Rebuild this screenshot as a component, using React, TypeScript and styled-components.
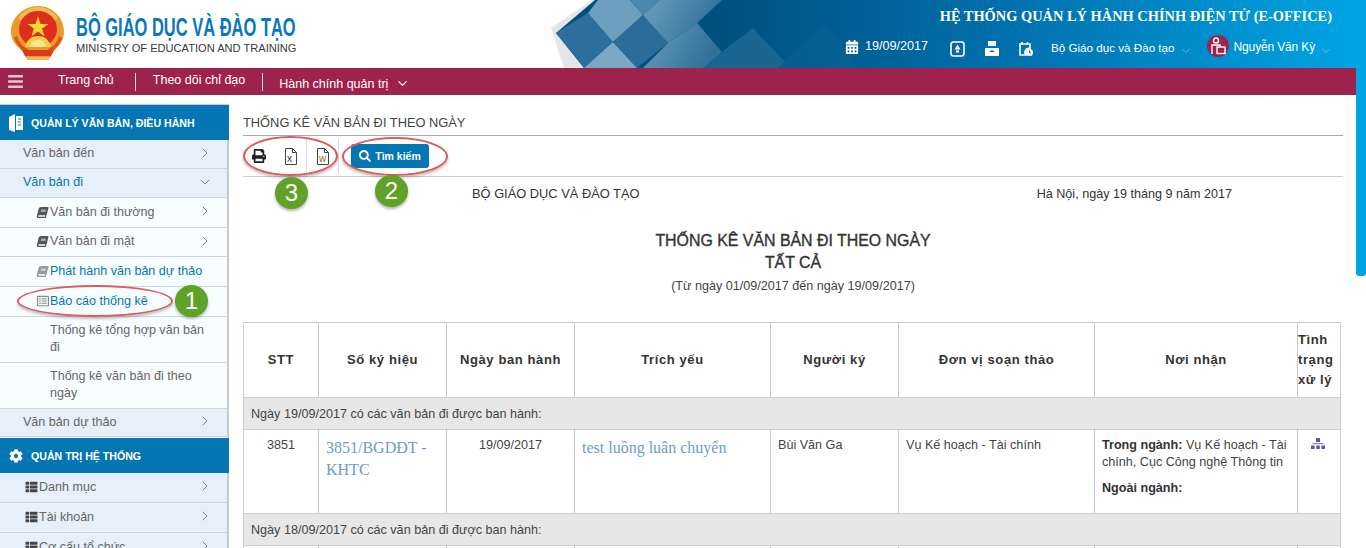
import React from "react";
import styled, { createGlobalStyle } from "styled-components";
import { FaCalendarAlt, FaPrint, FaSearch, FaBook, FaCog, FaThList, FaBars, FaRegListAlt } from "react-icons/fa";
import { ChevronRight, ChevronDown } from "lucide-react";

const Global = createGlobalStyle`
  html, body { margin: 0; padding: 0; background: #fff; overflow: hidden; }
  body { font-family: "Liberation Sans", Arial, sans-serif; color: #333; }
  * { box-sizing: border-box; }
`;

const Page = styled.div`
  position: relative;
  width: 1366px;
  height: 548px;
  overflow: hidden;
  background: #fff;
`;
const Frame = styled.div`
  width: 1356px;
`;
const ScrollThumb = styled.div`
  position: absolute;
  top: 0;
  right: 0;
  width: 10px;
  height: 276px;
  background: #00a3e3;
  border-radius: 0 0 3px 3px;
`;

/* Header */
const Header = styled.header`
  position: relative;
  height: 68px;
  display: flex;
  justify-content: space-between;
  overflow: hidden;
`;
const HeaderArt = styled.svg`
  position: absolute;
  left: 0;
  top: 0;
`;
const Brand = styled.div`
  position: relative;
  display: flex;
  padding: 5px 0 0 10px;
  gap: 10px;
`;
const BrandText = styled.div`
  display: flex;
  flex-direction: column;
  padding-top: 8px;
`;
const BrandTitle = styled.div`
  font-size: 25px;
  line-height: 28px;
  font-weight: 700;
  color: #0a76bd;
  white-space: nowrap;
  width: 220px;
  transform: scaleX(0.659);
  transform-origin: left center;
`;
const BrandSub = styled.div`
  font-size: 11.1px;
  line-height: 13px;
  margin-top: 1px;
  color: #3a3a3a;
  white-space: nowrap;
`;
const HeaderRight = styled.div`
  position: relative;
  display: flex;
  flex-direction: column;
  align-items: flex-end;
  padding: 7px 24px 0 0;
  color: #fff;
`;
const SystemTitle = styled.div`
  font-family: "Liberation Serif", serif;
  font-weight: 700;
  font-size: 14.4px;
  line-height: 18px;
  white-space: nowrap;
`;
const Tools = styled.div`
  display: flex;
  align-items: center;
  margin-top: 10px;
  height: 24px;
  font-size: 12px;
  white-space: nowrap;
`;
const DateText = styled.span`
  font-size: 12.6px;
  margin: 0 22px 0 6px;
  position: relative;
  top: -1px;
`;
const ToolIcon = styled.svg<{ $gap?: number }>`
  margin: 3px ${(p) => p.$gap ?? 20}px 0 0;
  flex: none;
`;
const OrgName = styled.span`
  font-size: 11.65px;
`;
const PersonName = styled.span`
  letter-spacing: -0.15px;
`;
const Caret = styled(ChevronDown)`
  color: #9cc7e2;
  margin: 8px 0 0 5px;
  flex: none;
`;
const Avatar = styled.span`
  width: 22px;
  height: 22px;
  border-radius: 50%;
  background: #9e2349;
  margin: -2px 5px 0 15px;
  display: flex;
  align-items: center;
  justify-content: center;
  flex: none;
`;

/* Nav */
const NavBar = styled.nav`
  height: 27px;
  background: #9e234c;
  color: #fff;
  display: flex;
  align-items: center;
  font-size: 12.5px;
`;
const Burger = styled(FaBars)`
  margin-left: 8px;
  color: #e6c5d0;
  width: 15px;
  height: 17px;
  margin-right: 35px;
`;
const NavLink = styled.span<{ $last?: boolean }>`
  padding: 0 ${(p) => (p.$last ? 0 : 17)}px 0 ${(p) => (p.$last ? 16 : 17)}px;
  height: 18px;
  line-height: 14px;
  white-space: nowrap;
  display: flex;
  align-items: ${(p) => (p.$last ? "flex-end" : "flex-start")};
  border-right: ${(p) => (p.$last ? "none" : "1px solid #f1dde4")};
  &:first-of-type { padding-left: 0; padding-right: 21px; }
`;
const NavCaret = styled(ChevronDown)`
  margin-left: 7px;
  flex: none;
`;

/* Main */
const Main = styled.div`
  display: flex;
  height: 453px;
`;
const Sidebar = styled.aside`
  width: 229px;
  flex: none;
  padding-top: 9px;
  background: #fff;
`;
const SideWrap = styled.div`
  border-top: 1px solid #ccc;
`;
const SideHead = styled.div`
  height: 35px;
  background: #0476b3;
  color: #fff;
  display: flex;
  align-items: center;
  padding-left: 9px;
  font-size: 10.6px;
  font-weight: 700;
  gap: 8px;
`;
const SideGroup = styled.div`
  border-right: 2px solid #c9c9c9;
  padding-bottom: 1px;
`;
const Item = styled.div<{ $sub?: boolean; $h: number; $active?: boolean; $pad?: number }>`
  min-height: ${(p) => p.$h}px;
  background: ${(p) => (p.$sub ? "#f7feff" : "#e5f0fb")};
  border-bottom: 1px solid #cfd6da;
  color: ${(p) => (p.$active ? "#0676b3" : "#666")};
  font-size: 12.55px;
  line-height: 17px;
  padding: 0 13px 1px ${(p) => p.$pad ?? 23}px;
  display: flex;
  align-items: center;
  justify-content: space-between;
`;
const ItemLabel = styled.span`
  display: flex;
  align-items: center;
`;
const ItemChevron = styled.span`
  color: #666;
  display: flex;
  position: relative;
  left: -1px;
  top: -1px;
`;
const BookIcon = styled(FaBook)<{ $light?: boolean }>`
  width: 13px;
  height: 11px;
  color: ${(p) => (p.$light ? "#999" : "#555")};
  margin-right: 1px;
  transform: skewX(-14deg);
`;
const ReportIcon = styled(FaRegListAlt)`
  width: 14px;
  height: 12px;
  color: #888;
`;
const ListIcon = styled(FaThList)`
  width: 15px;
  height: 12px;
  color: #444;
`;

/* Content */
const Content = styled.main`
  flex: 1;
  padding: 0 13px 0 14px;
  min-width: 0;
`;
const PageTitle = styled.h1`
  margin: 0;
  height: 41px;
  padding-top: 20px;
  font-size: 12.85px;
  line-height: 16px;
  font-weight: 400;
  color: #444;
  border-bottom: 1px solid #aaa;
`;
const Toolbar = styled.div`
  height: 41px;
  border-bottom: 1px solid #ccc;
  display: flex;
  align-items: center;
`;
const ToolGroup = styled.div<{ $w: number; $sep?: boolean }>`
  width: ${(p) => p.$w}px;
  height: 36px;
  display: flex;
  align-items: center;
  padding-left: 9px;
  gap: 18px;
  border-right: ${(p) => (p.$sep ? "1px solid #ddd" : "none")};
`;
const SearchButton = styled.button`
  margin-left: 12px;
  width: 78px;
  height: 24px;
  border: none;
  border-radius: 3px;
  background: #0476b3;
  color: #fff;
  font: 700 10.5px "Liberation Sans", sans-serif;
  display: flex;
  align-items: center;
  justify-content: center;
  gap: 4px;
`;
const ReportHead = styled.div`
  display: flex;
  justify-content: space-between;
  padding: 9px 111px 0 229px;
  font-size: 12.6px;
  line-height: 16px;
  color: #333;
`;
const IssuerName = styled.span`
  font-size: 12.85px;
`;
const ReportTitle = styled.div`
  text-align: center;
  margin-top: 28px;
  font-size: 15.9px;
  line-height: 22px;
  color: #333;
  -webkit-text-stroke: 0.35px #333;
`;
const ReportRange = styled.div`
  text-align: center;
  font-size: 12.6px;
  line-height: 16px;
  margin-top: 4px;
  margin-bottom: 28px;
  color: #444;
`;
const Table = styled.table`
  border-collapse: collapse;
  table-layout: fixed;
  width: 1097px;
  font-size: 12.6px;
  color: #333;
  td, th { border: 1px solid #ccc; }
`;
const Th = styled.th<{ $left?: boolean }>`
  height: 75px;
  font-size: 13px;
  font-weight: 700;
  letter-spacing: 0.6px;
  padding: 0 ${(p) => (p.$left ? 0 : 4)}px;
  line-height: 20px;
  text-align: ${(p) => (p.$left ? "left" : "center")};
  color: #333;
`;
const GroupCell = styled.td`
  height: 32px;
  background: #e7e7e7;
  padding: 0 7px;
  color: #444;
`;
const Td = styled.td<{ $center?: boolean }>`
  height: 84px;
  vertical-align: top;
  padding: 7px 7px 0;
  line-height: 16px;
  text-align: ${(p) => (p.$center ? "center" : "left")};
  color: #444;
`;
const DocLink = styled.a`
  display: block;
  font-family: "Liberation Serif", serif;
  font-size: 16px;
  line-height: 22px;
  color: #6c9bd2;
`;
const Recipient = styled.p`
  margin: 0 0 9px;
  line-height: 17px;
  b { color: #333; }
`;
const StatusSvg = styled.svg`
  display: block;
  margin: 1px auto 0 6px;
`;

/* Annotations drawn over the screenshot */
const Oval = styled.div<{ $x: number; $y: number; $w: number; $h: number }>`
  position: absolute;
  left: ${(p) => p.$x}px;
  top: ${(p) => p.$y}px;
  width: ${(p) => p.$w}px;
  height: ${(p) => p.$h}px;
  border: 2px solid #de5b5b;
  border-radius: 50%;
  box-shadow: 0 2px 3px rgba(0, 0, 0, 0.25);
  pointer-events: none;
`;
const Badge = styled.div<{ $x: number; $y: number }>`
  position: absolute;
  left: ${(p) => p.$x}px;
  top: ${(p) => p.$y}px;
  width: 33px;
  height: 32px;
  border-radius: 50%;
  background: #5fa227;
  color: #fff;
  font-size: 24px;
  line-height: 32px;
  text-align: center;
  box-shadow: 0 2px 3px rgba(0, 0, 0, 0.3);
`;

const Emblem = () => (
  <svg width="56" height="56" viewBox="0 0 56 56">
    <path d="M28 1c14 0 26 11 26 26 0 9-5 14-11 20l-3 6H16l-3-6C7 41 1 36 1 27 1 12 14 1 28 1z" fill="#e89a2b" />
    <path d="M28 2c8 0 15 4 20 11L44 16C40 11 34 7 28 7S16 11 12 16L8 13C13 6 20 2 28 2z" fill="#f2bb4d" />
    <ellipse cx="28" cy="24" rx="19" ry="18" fill="#dd2e1f" />
    <path d="M28 9l3.400 10.200H42l-8.600 6.200 3.300 10.200L28 29.400l-8.700 6.200 3.300-10.200L14 19.200h10.600z" fill="#f6d72f" transform="translate(7 4.500) scale(.75)" />
    <path d="M15 42c2-8 7-11 13-11s11 3 13 11z" fill="#f4cf45" />
    <path d="M20 42c1-5 4-7 8-7s7 2 8 7z" fill="#f9e68e" />
    <path d="M4 33c3 8 8 12 12 15l2-4C13 42 9 38 7 31zM52 33c-3 8-8 12-12 15l-2-4c5-2 9-6 11-13z" fill="#d9531e" />
    <path d="M12 45h32l-3 6H15z" fill="#db3a21" />
    <path d="M17 52h22v3H17z" fill="#eeb75a" />
  </svg>
);

const XFile = ({ letter, color }: { letter: string; color: string }) => (
  <svg width="14" height="17" viewBox="0 0 14 17" fill="none">
    <path d="M1.500.5h7l4 4v12h-11z" stroke="#444" fill="#fff" />
    <path d="M8.500.5v4h4" stroke="#444" />
    <text x="3" y="14" fontSize="10" fontFamily="Liberation Sans" fill={color}>{letter}</text>
  </svg>
);

const Chev = () => (
  <ItemChevron><ChevronRight size={16} strokeWidth={1.2} /></ItemChevron>
);

export default function App() {
  return (
    <Page>
      <Global />
      <Frame>
        <Header>
          <HeaderArt width="1356" height="68" viewBox="0 0 1356 68">
            <defs>
              <linearGradient id="hb" x1="0" x2="1" y1="0" y2="0">
                <stop offset="0" stopColor="#00507f" />
                <stop offset="0.2" stopColor="#00507f" />
                <stop offset="0.6" stopColor="#0174b2" />
                <stop offset="1" stopColor="#00a4e4" />
              </linearGradient>
              <linearGradient id="fade" x1="0" x2="1" y1="0" y2="0.3">
                <stop offset="0" stopColor="#6d9fbe" />
                <stop offset="1" stopColor="#2f7099" />
              </linearGradient>
            </defs>
            <polygon points="592,0 551,28 564,68 590,68 600,0" fill="#e4e5e6" />
            <polygon points="595,0 1356,0 1356,68 584,68 556,33" fill="url(#hb)" />
            <polygon points="556,33 588,13 613,42 584,68" fill="#2c6f9c" />
            <polygon points="588,13 598,0 630,0 643,15 613,42" fill="#6d9fbe" />
            <polygon points="584,68 613,42 637,68" fill="#7aa8c5" />
            <polygon points="613,42 643,15 668,43 637,68" fill="#2b6d99" />
            <polygon points="630,0 660,0 643,15" fill="#4c88ad" />
            <polygon points="643,15 660,0 722,0 697,23 668,43" fill="url(#fade)" />
            <polygon points="668,43 697,23 722,52 704,68 643,68" fill="url(#fade)" />
            <polygon points="722,52 753,28 785,62 778,68 704,68" fill="#1a6492" />
            <polygon points="785,62 825,22 860,68 778,68" fill="#0d6395" opacity="0.45" />
          </HeaderArt>
          <Brand>
            <Emblem />
            <BrandText>
              <BrandTitle>BỘ GIÁO DỤC VÀ ĐÀO TẠO</BrandTitle>
              <BrandSub>MINISTRY OF EDUCATION AND TRAINING</BrandSub>
            </BrandText>
          </Brand>
          <HeaderRight>
            <SystemTitle>HỆ THỐNG QUẢN LÝ HÀNH CHÍNH ĐIỆN TỬ (E-OFFICE)</SystemTitle>
            <Tools>
              <FaCalendarAlt size={14} />
              <DateText>19/09/2017</DateText>
              <ToolIcon width="15" height="16" viewBox="0 0 15 16">
                <rect x="1" y="1" width="13" height="14" rx="2.500" fill="none" stroke="#fff" strokeWidth="1.600" />
                <path d="M7.500 3.500l3 5h-6z M6 9.500h3v2H6z" fill="#fff" />
              </ToolIcon>
              <ToolIcon width="14" height="15" viewBox="0 0 14 15">
                <path d="M3 0h8v5H3zM0 7h14v8H0zM5 9.500h4v1.500H5z" fill="#fff" fillRule="evenodd" />
              </ToolIcon>
              <ToolIcon $gap={18} width="14" height="16" viewBox="0 0 14 16">
                <path d="M1 3h10v4.500a4 4 0 0 0-4 6.500H1z" fill="none" stroke="#fff" strokeWidth="1.600" />
                <path d="M3 1v3M8.500 1v3" stroke="#fff" strokeWidth="1.600" />
                <circle cx="10.500" cy="11.500" r="3.500" fill="#fff" />
                <path d="M10.500 9.500v2.300h1.600" stroke="#0a6ea8" fill="none" />
              </ToolIcon>
              <OrgName>Bộ Giáo dục và Đào tạo</OrgName>
              <Caret size={12} strokeWidth={1.500} />
              <Avatar>
                <svg width="16" height="18" viewBox="0 0 16 18" fill="none" stroke="#fff" strokeWidth="1.400">
                  <circle cx="6" cy="3.500" r="2.500" />
                  <path d="M2 17V8h8v2" />
                  <rect x="7" y="10" width="8" height="6.500" />
                </svg>
              </Avatar>
              <PersonName>Nguyễn Văn Kỳ</PersonName>
              <Caret size={12} strokeWidth={1.500} />
            </Tools>
          </HeaderRight>
        </Header>
        <NavBar>
          <Burger />
          <NavLink>Trang chủ</NavLink>
          <NavLink>Theo dõi chỉ đạo</NavLink>
          <NavLink $last>Hành chính quản trị<NavCaret size={15} strokeWidth={2} /></NavLink>
        </NavBar>
        <Main>
          <Sidebar>
            <SideWrap>
              <SideHead>
                <svg width="14" height="18" viewBox="0 0 14 18" fill="#fff">
                  <path d="M0 3l6-3v18l-6-2z" />
                  <path d="M7 2h7v14H7z" />
                  <path d="M9 5h3M9 8h3M9 11h3" stroke="#0476b3" />
                </svg>
                QUẢN LÝ VĂN BẢN, ĐIỀU HÀNH
              </SideHead>
              <SideGroup>
                <Item $h={29}>Văn bản đến<Chev /></Item>
                <Item $h={29} $active>Văn bản đi<ItemChevron><ChevronDown size={16} strokeWidth={1.2} /></ItemChevron></Item>
                <Item $h={30} $sub $pad={36}><ItemLabel><BookIcon />Văn bản đi thường</ItemLabel><Chev /></Item>
                <Item $h={29} $sub $pad={36}><ItemLabel><BookIcon />Văn bản đi mật</ItemLabel><Chev /></Item>
                <Item $h={30} $sub $pad={36} $active><ItemLabel><BookIcon $light />Phát hành văn bản dự thảo</ItemLabel></Item>
                <Item $h={30} $sub $pad={36} $active><ItemLabel><ReportIcon />Báo cáo thống kê</ItemLabel></Item>
                <Item $h={46} $sub $pad={50}>Thống kê tổng hợp văn bản đi</Item>
                <Item $h={46} $sub $pad={50}>Thống kê văn bản đi theo ngày</Item>
                <Item $h={28}>Văn bản dự thảo<Chev /></Item>
              </SideGroup>
              <SideHead>
                <FaCog size={14} />
                QUẢN TRỊ HỆ THỐNG
              </SideHead>
              <SideGroup>
                <Item $h={30} $pad={24}><ItemLabel><ListIcon />Danh mục</ItemLabel><Chev /></Item>
                <Item $h={30} $pad={24}><ItemLabel><ListIcon />Tài khoản</ItemLabel><Chev /></Item>
                <Item $h={30} $pad={24}><ItemLabel><ListIcon />Cơ cấu tổ chức</ItemLabel><Chev /></Item>
              </SideGroup>
            </SideWrap>
          </Sidebar>
          <Content>
            <PageTitle>THỐNG KÊ VĂN BẢN ĐI THEO NGÀY</PageTitle>
            <Toolbar>
              <ToolGroup $w={64} $sep>
                <FaPrint size={14} color="#222" />
                <XFile letter="x" color="#333" />
              </ToolGroup>
              <ToolGroup $w={32} $sep>
                <XFile letter="w" color="#8a6a20" />
              </ToolGroup>
              <SearchButton><FaSearch size={12} />Tìm kiếm</SearchButton>
            </Toolbar>
            <ReportHead>
              <IssuerName>BỘ GIÁO DỤC VÀ ĐÀO TẠO</IssuerName>
              <span>Hà Nội, ngày 19 tháng 9 năm 2017</span>
            </ReportHead>
            <ReportTitle>THỐNG KÊ VĂN BẢN ĐI THEO NGÀY<br />TẤT CẢ</ReportTitle>
            <ReportRange>(Từ ngày 01/09/2017 đến ngày 19/09/2017)</ReportRange>
            <Table>
              <colgroup>
                <col width="75" /><col width="128" /><col width="128" /><col width="196" />
                <col width="128" /><col width="196" /><col width="203" /><col width="43" />
              </colgroup>
              <thead>
                <tr>
                  <Th>STT</Th><Th>Số ký hiệu</Th><Th>Ngày ban hành</Th><Th>Trích yếu</Th>
                  <Th>Người ký</Th><Th>Đơn vị soạn thảo</Th><Th>Nơi nhận</Th><Th $left>Tình trạng xử lý</Th>
                </tr>
              </thead>
              <tbody>
                <tr><GroupCell colSpan={8}>Ngày 19/09/2017 có các văn bản đi được ban hành:</GroupCell></tr>
                <tr>
                  <Td $center>3851</Td>
                  <Td><DocLink>3851/BGDĐT - KHTC</DocLink></Td>
                  <Td $center>19/09/2017</Td>
                  <Td><DocLink>test luồng luân chuyển</DocLink></Td>
                  <Td>Bùi Văn Ga</Td>
                  <Td>Vụ Kế hoạch - Tài chính</Td>
                  <Td>
                    <Recipient><b>Trong ngành:</b> Vụ Kế hoạch - Tài chính, Cục Công nghệ Thông tin</Recipient>
                    <Recipient><b>Ngoài ngành:</b></Recipient>
                  </Td>
                  <Td>
                    <StatusSvg width="14" height="11" viewBox="0 0 14 11" fill="#5a57ad">
                      <rect x="5" y="0" width="4" height="4" />
                      <rect x="1.500" y="5" width="11" height="1.200" opacity="0.7" />
                      <rect x="0" y="7.500" width="3.600" height="3.500" />
                      <rect x="5.200" y="7.500" width="3.600" height="3.500" />
                      <rect x="10.400" y="7.500" width="3.600" height="3.500" />
                    </StatusSvg>
                  </Td>
                </tr>
                <tr><GroupCell colSpan={8}>Ngày 18/09/2017 có các văn bản đi được ban hành:</GroupCell></tr>
                <tr>
                  <Td /><Td /><Td /><Td /><Td /><Td /><Td /><Td />
                </tr>
              </tbody>
            </Table>
          </Content>
        </Main>
      </Frame>
      <ScrollThumb />
      <Oval $x={17} $y={285} $w={156} $h={32} />
      <Oval $x={243} $y={136} $w={95} $h={40} />
      <Oval $x={342} $y={137} $w={106} $h={39} />
      <Badge $x={175} $y={285}>1</Badge>
      <Badge $x={375} $y={175}>2</Badge>
      <Badge $x={275} $y={177}>3</Badge>
    </Page>
  );
}
